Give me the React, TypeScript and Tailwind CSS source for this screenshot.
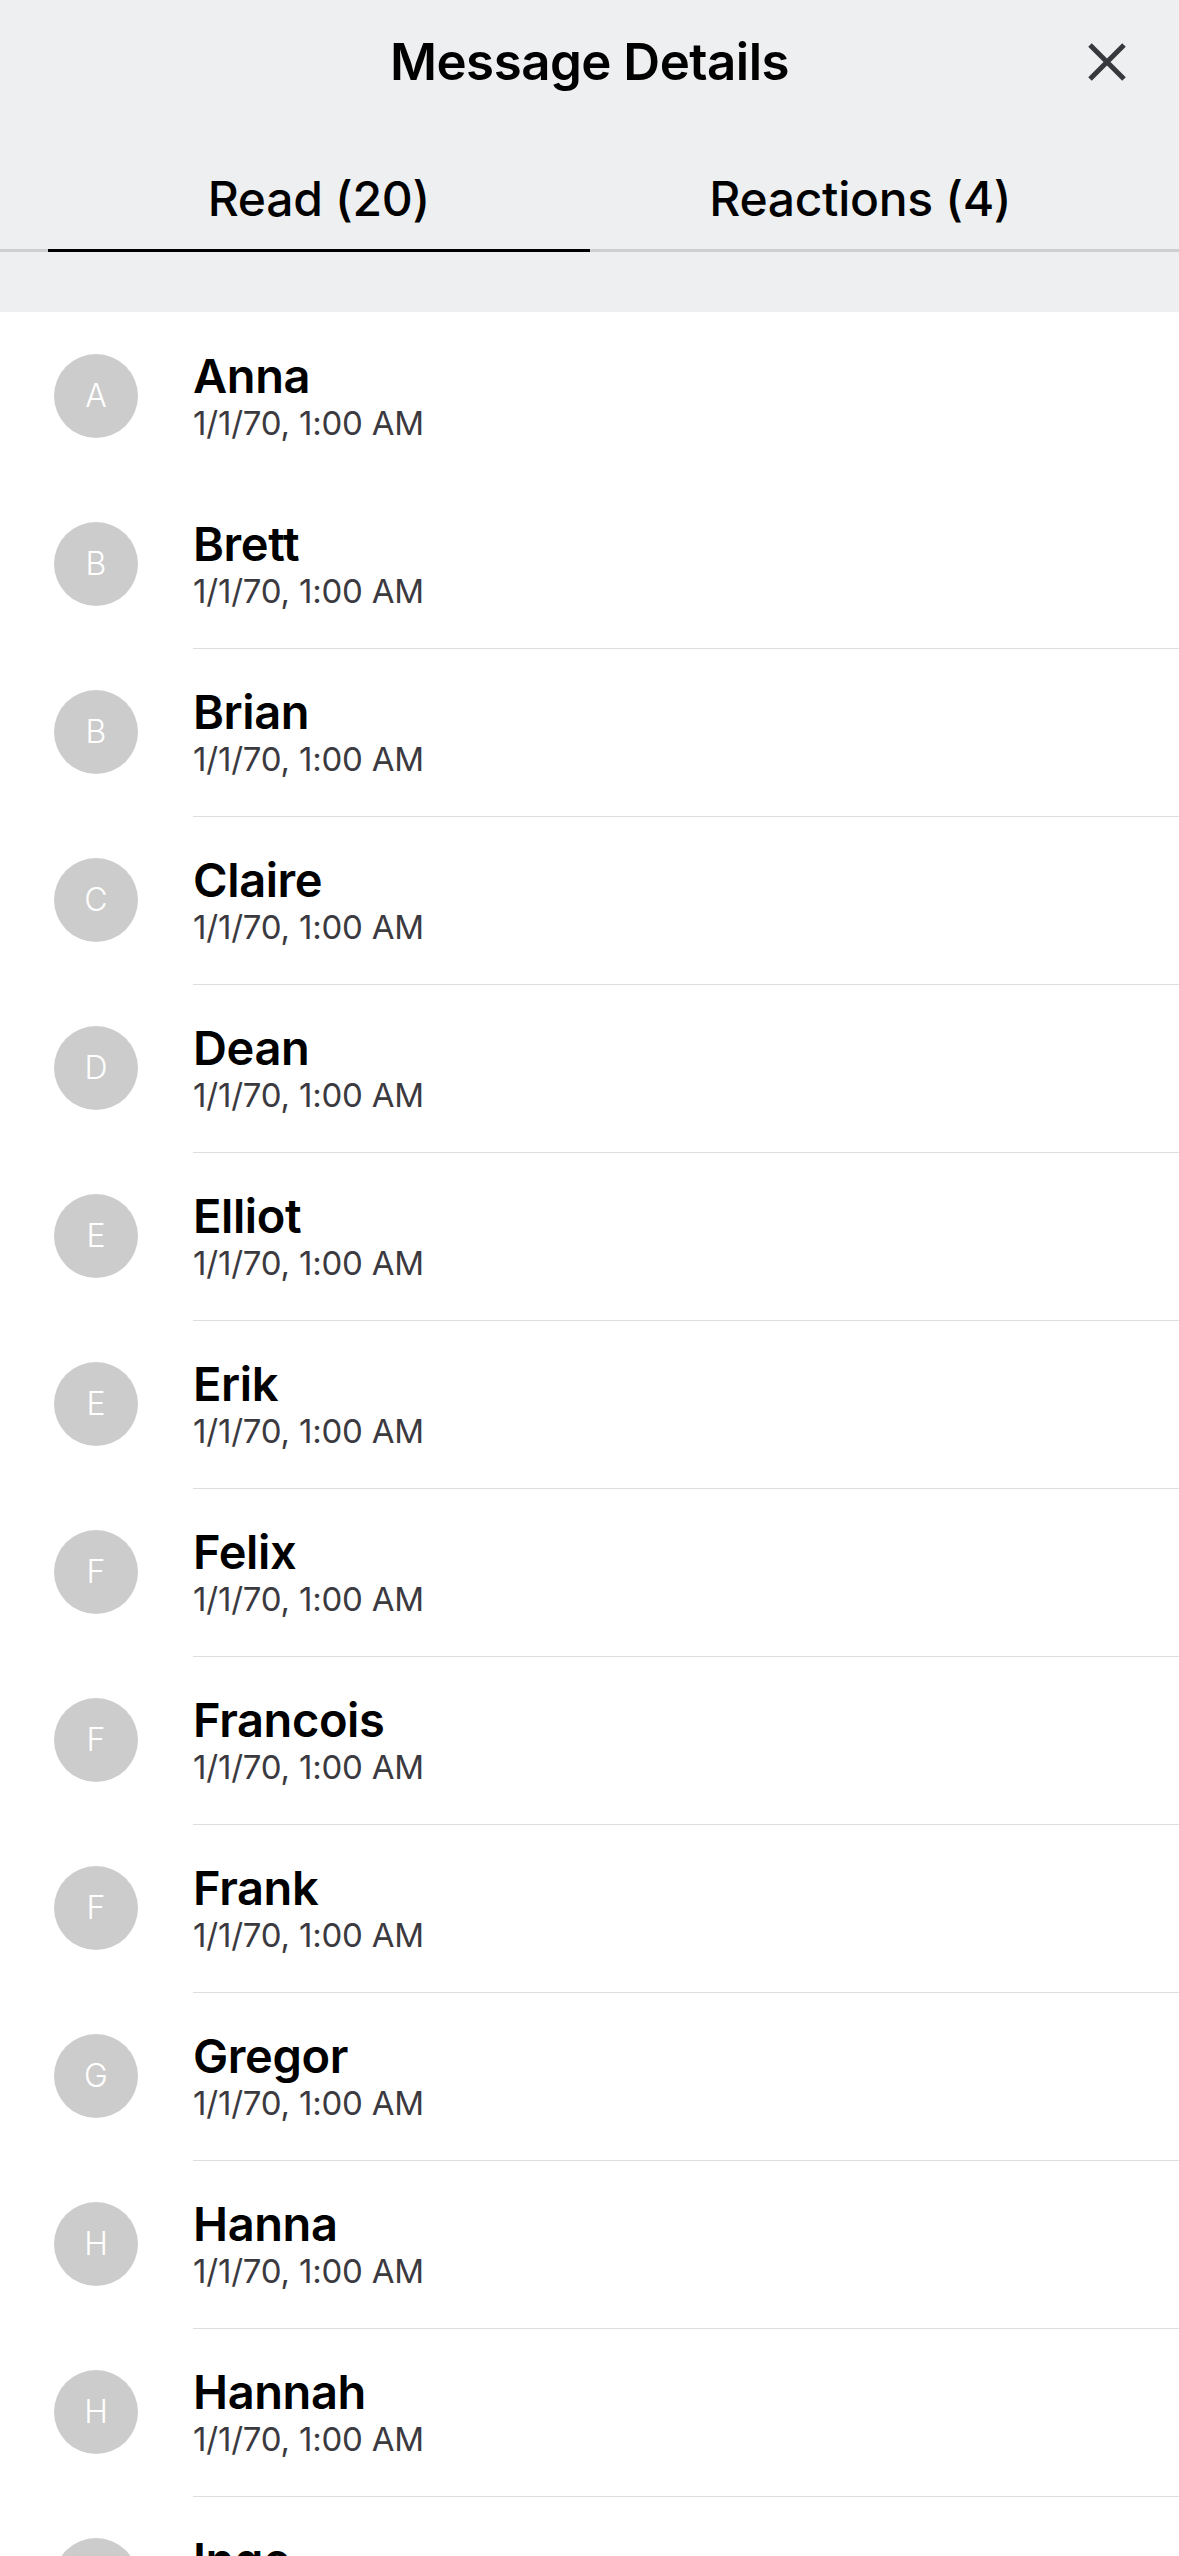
import React from "react";

const names = [
  "Anna",
  "Brett",
  "Brian",
  "Claire",
  "Dean",
  "Elliot",
  "Erik",
  "Felix",
  "Francois",
  "Frank",
  "Gregor",
  "Hanna",
  "Hannah",
  "Inge",
];

function Row({ name, first }: { name: string; first: boolean }) {
  return (
    <div className="flex h-[168px] shrink-0 items-stretch bg-white">
      <div className="flex w-[193px] shrink-0 items-center pl-[54px]">
        <div className="flex h-[84px] w-[84px] items-center justify-center rounded-full bg-[#cccccc]">
          <span className="text-[32px] font-light leading-none text-white">{name[0]}</span>
        </div>
      </div>
      <div
        className={
          first
            ? "flex flex-1 flex-col pt-[40px]"
            : "flex flex-1 flex-col border-t border-[#dedee0] pt-[39px]"
        }
      >
        <div className="text-[47px] font-semibold leading-none tracking-[-0.4px] text-black">{name}</div>
        <div className="mt-[8px] text-[33px] leading-none tracking-[-0.2px] text-[#3a3a40]">1/1/70, 1:00 AM</div>
      </div>
    </div>
  );
}

export default function App() {
  return (
    <div
      className="flex h-[2556px] w-[1179px] flex-col overflow-hidden bg-white"
      style={{ fontFamily: "Inter, 'Noto Sans', sans-serif" }}
    >
      <div className="shrink-0 bg-[#eeeff1]">
        <div className="grid h-[123px] grid-cols-[1fr_auto_1fr] items-center">
          <div />
          <div className="text-[51px] font-semibold leading-none tracking-[-0.5px] text-black">
            Message Details
          </div>
          <div className="flex justify-end pr-[52px]">
            <svg width="40" height="40" viewBox="0 0 40 40" fill="none">
              <path d="M3 3L37 37M37 3L3 37" stroke="#36383d" strokeWidth="5" />
            </svg>
          </div>
        </div>
        <div className="border-b-[3px] border-[#cfcfd2]">
          <div className="-mb-[3px] flex px-[48px]">
            <div className="flex flex-1 justify-center border-b-[3px] border-black pb-[26px] pt-[52px]">
              <span className="text-[48px] font-medium leading-none tracking-[-0.3px] text-black">Read (20)</span>
            </div>
            <div className="flex flex-1 justify-center border-b-[3px] border-transparent pb-[26px] pt-[52px]">
              <span className="text-[48px] font-medium leading-none tracking-[-0.3px] text-black">
                Reactions (4)
              </span>
            </div>
          </div>
        </div>
        <div className="h-[60px]" />
      </div>
      <div className="flex flex-col">
        {names.map((n, i) => (
          <Row key={n} name={n} first={i < 2} />
        ))}
      </div>
    </div>
  );
}
